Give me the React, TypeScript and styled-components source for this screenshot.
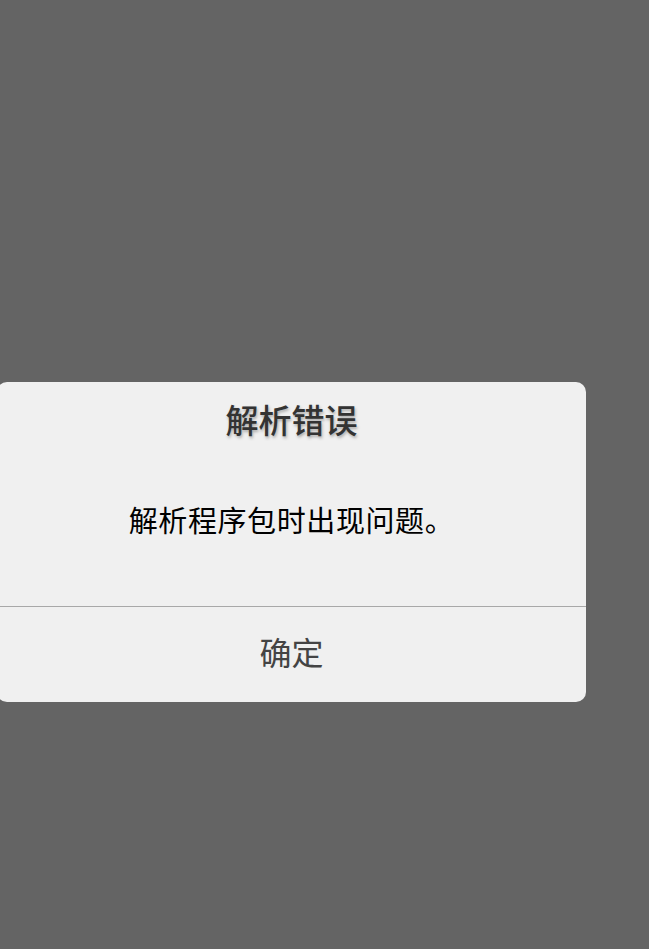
import React from 'react';
import styled, { createGlobalStyle } from 'styled-components';

const GlobalStyle = createGlobalStyle`
  html, body {
    margin: 0;
    padding: 0;
    height: 100%;
    overflow: hidden;
    background-color: #646464;
  }
`;

const Overlay = styled.div`
  width: 649px;
  height: 949px;
  background-color: #646464;
  padding-top: 382px;
  box-sizing: border-box;
  overflow: hidden;
  font-family: "Noto Sans CJK SC", "Liberation Sans", sans-serif;
`;

const Dialog = styled.div`
  width: 589px;
  height: 320px;
  margin-left: -3px;
  background-color: #f0f0f0;
  border-radius: 10px;
  display: flex;
  flex-direction: column;
`;

const Title = styled.h1`
  margin: 0;
  padding-top: 15px;
  height: 45px;
  font-size: 33px;
  line-height: 45px;
  font-weight: 500;
  text-align: center;
  color: #333;
  text-shadow: 1px 2px 3px #aaa;
`;

const Message = styled.p`
  margin: 0;
  padding-bottom: 10px;
  flex: 1;
  display: flex;
  align-items: center;
  justify-content: center;
  font-size: 29px;
  letter-spacing: 0.6px;
  color: #000;
`;

const ConfirmButton = styled.button`
  height: 96px;
  border: none;
  border-top: 1px solid #a8a8a8;
  background: transparent;
  padding: 0 0 8px;
  font-family: inherit;
  font-size: 32px;
  color: #444;
`;

const App: React.FC = () => (
  <>
    <GlobalStyle />
    <Overlay>
      <Dialog>
        <Title>解析错误</Title>
        <Message>解析程序包时出现问题。</Message>
        <ConfirmButton>确定</ConfirmButton>
      </Dialog>
    </Overlay>
  </>
);

export default App;
